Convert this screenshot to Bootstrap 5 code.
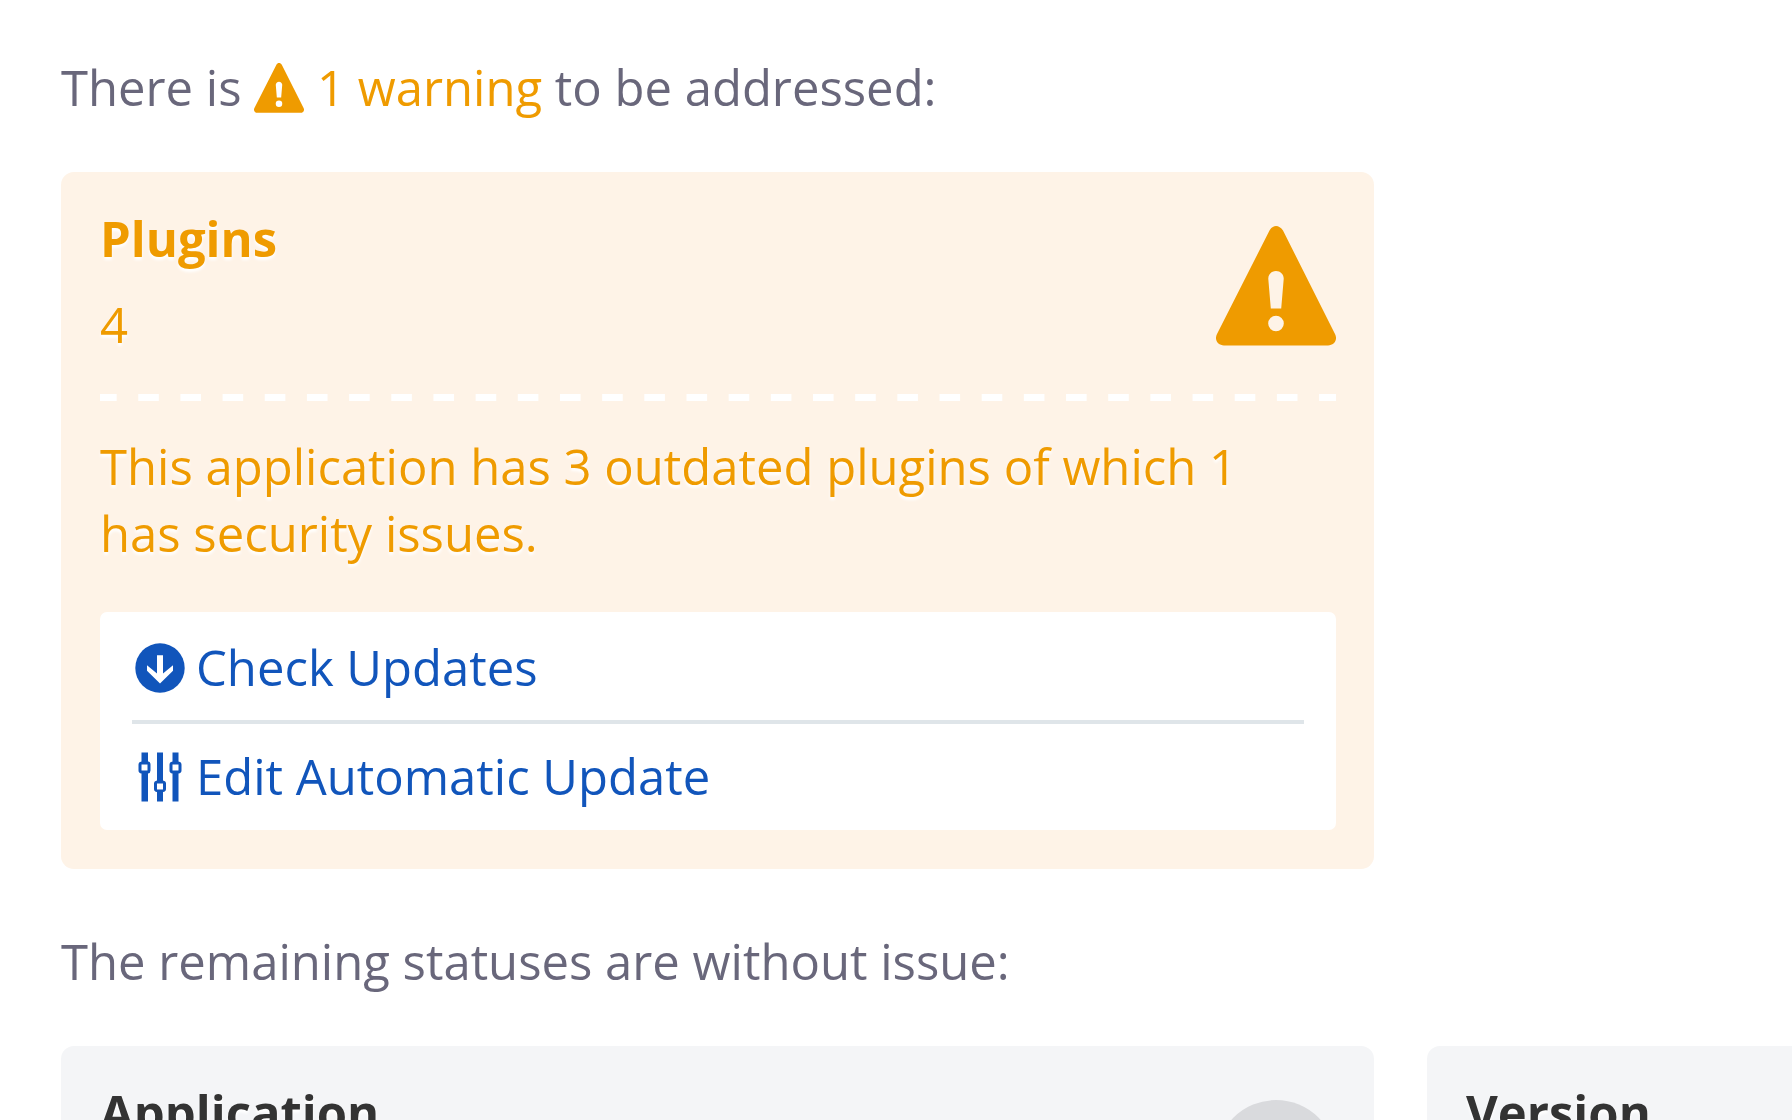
<!DOCTYPE html>
<html lang="en">
<head>
<meta charset="utf-8">
<meta name="viewport" content="width=device-width, initial-scale=1">
<title>Application status</title>
<link href="https://cdn.jsdelivr.net/npm/bootstrap@5.3.0/dist/css/bootstrap.min.css" rel="stylesheet">
<style>
  body { font-family: "Open Sans", sans-serif; font-size: 49px; line-height: 67px; color: #69677b; background: #fff; }
  .status-page { padding: 54px 0 0 61px; }
  .status-intro { margin-bottom: 51px; }
  .status-row { gap: 53px; margin-bottom: 59px; }
  .status-card { flex: 0 0 75.85%; padding: 33px 38px 39px 39px; border-radius: 13px; background: #f4f5f7; color: #333; text-shadow: 0 3px 3px #fff; }
  .status-card h2 { font-size: inherit; line-height: inherit; margin-bottom: 19px; }
  .status-card.is-warning { background: #fef3e7; color: #ef9b00; }
  .tone-warning { color: #ef9b00; }
  .inline-icon { width: 50px; height: 50px; flex: none; }
  .inline-icon.in-text { vertical-align: -7px; }
  .status-icon { width: 120px; height: 120px; margin-top: 21px; flex: none; }
  .dash-rule { height: 7px; margin: 36px 0 32px; background: linear-gradient(90deg, #fff 40%, transparent 40% 90%, #fff 90%) 0 0 / calc(100% / 29.3) 100% repeat-x; }
  .status-text { margin-bottom: 45px; padding-right: 32px; }
  .action-list { padding: 3px 32px 1px; border-radius: 7px; text-shadow: none; }
  .action-list li + li { border-top: 4px solid #dfe5e9; }
  .action-list a { color: #1155bb; padding: 19px 3px; gap: 11px; }
</style>
</head>
<body>
<svg class="d-none" xmlns="http://www.w3.org/2000/svg">
  <symbol id="warning" viewBox="0 0 120 120">
    <path fill="currentColor" fill-rule="evenodd" d="M53.500 4.500C57-1.500 63-1.500 67 4.500L119 108C122 114 118 119.500 112 119.500H8C2 119.500-2 114 1 108ZM60 45C55.500 45 52 48.500 52.300 53L54.800 82.500H65.200L67.700 53C68 48.500 64.500 45 60 45ZM60 89.700A7.800 7.800 0 1 0 60 105.300A7.800 7.800 0 1 0 60 89.700Z"/>
  </symbol>
  <symbol id="arrow-down" viewBox="0 0 50 50">
    <circle cx="25" cy="25" r="24.700" fill="currentColor"/>
    <path fill="#fff" d="M22 12.300H28V30.500L38 22.200V27.700L25 40.500L12 27.700V22.200L22 30.500Z"/>
  </symbol>
  <symbol id="sliders" viewBox="0 0 50 50">
    <path fill="currentColor" fill-rule="evenodd" d="M6.500 .500H13V9.500H13.500Q15.500 10 15.500 12.500V18.500Q15.500 21 13 21.500V49.500H6.500V21.500Q3.500 21 3.500 18.500V12.500Q3.500 10 6.500 9.500ZM6.500 12.500V18.500H12.500V12.500ZM22 .500H28V28.500Q31 29 31 31.500V37Q31 39.500 28 40V49.500H22V40Q19 39.500 19 37V31.500Q19 29 22 28.500ZM22 31.500V37.500H28V31.500ZM37.500 .500H43.500V9.500Q46.500 10 46.500 12.500V18.500Q46.500 21 43.500 21.500V49.500H37.500V21.500Q34.500 21 34.500 18.500V12.500Q34.500 10 37.500 9.500ZM37.500 12.500V18.500H43.500V12.500Z"/>
  </symbol>
  <symbol id="disc" viewBox="0 0 120 120"><circle cx="60" cy="60" r="60" fill="#d9dadd"/></symbol>
</svg>
<main class="status-page vh-100 overflow-hidden">
  <p class="status-intro">There is <span class="tone-warning"><svg class="inline-icon in-text" aria-hidden="true"><use href="#warning"/></svg> 1 warning</span> to be addressed:</p>
  <div class="status-row d-flex">
    <section class="status-card is-warning">
      <div class="d-flex justify-content-between align-items-start">
        <div>
          <h2 class="fw-bold">Plugins</h2>
          <div>4</div>
        </div>
        <svg class="status-icon" aria-hidden="true"><use href="#warning"/></svg>
      </div>
      <div class="dash-rule"></div>
      <p class="status-text">This application has 3 outdated plugins of which 1 has security issues.</p>
      <ul class="action-list list-unstyled bg-white mb-0">
        <li><a class="d-flex align-items-center text-decoration-none" href="#updates"><svg class="inline-icon" aria-hidden="true"><use href="#arrow-down"/></svg>Check Updates</a></li>
        <li><a class="d-flex align-items-center text-decoration-none" href="#automatic"><svg class="inline-icon" aria-hidden="true"><use href="#sliders"/></svg>Edit Automatic Update</a></li>
      </ul>
    </section>
  </div>
  <p class="status-intro">The remaining statuses are without issue:</p>
  <div class="status-row d-flex">
    <section class="status-card d-flex justify-content-between align-items-start">
      <h2 class="fw-bold">Application</h2>
      <svg class="status-icon" aria-hidden="true"><use href="#disc"/></svg>
    </section>
    <section class="status-card">
      <h2 class="fw-bold">Version</h2>
    </section>
  </div>
</main>
<script src="https://cdn.jsdelivr.net/npm/bootstrap@5.3.0/dist/js/bootstrap.bundle.min.js"></script>
</body>
</html>
